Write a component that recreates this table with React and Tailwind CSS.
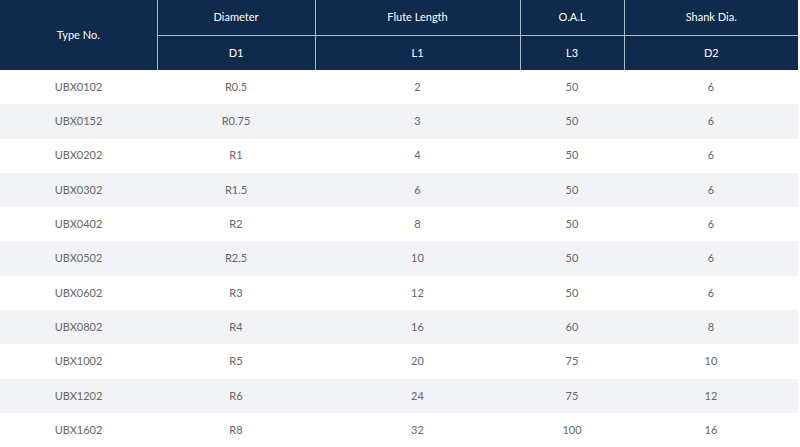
import React from "react";

const rows = [
  ["UBX0102", "R0.5", "2", "50", "6"],
  ["UBX0152", "R0.75", "3", "50", "6"],
  ["UBX0202", "R1", "4", "50", "6"],
  ["UBX0302", "R1.5", "6", "50", "6"],
  ["UBX0402", "R2", "8", "50", "6"],
  ["UBX0502", "R2.5", "10", "50", "6"],
  ["UBX0602", "R3", "12", "50", "6"],
  ["UBX0802", "R4", "16", "60", "8"],
  ["UBX1002", "R5", "20", "75", "10"],
  ["UBX1202", "R6", "24", "75", "12"],
  ["UBX1602", "R8", "32", "100", "16"],
];

export default function App() {
  return (
    <div className="w-[800px] h-[447px] bg-white overflow-hidden" style={{ fontFamily: "Lato, 'Open Sans', sans-serif" }}>
      <table className="w-[798px] table-fixed border-collapse text-[11px]">
        <colgroup>
          <col className="w-[157px]" />
          <col className="w-[158px]" />
          <col className="w-[205px]" />
          <col className="w-[104px]" />
          <col className="w-[174px]" />
        </colgroup>
        <thead className="bg-[#0f2a4b] text-white">
          <tr className="h-[35px]">
            <th rowSpan={2} className="font-normal text-center">Type No.</th>
            <th className="font-normal border-l border-b border-[#a9bccd]">Diameter</th>
            <th className="font-normal border-l border-b border-[#a9bccd]">Flute Length</th>
            <th className="font-normal border-l border-b border-[#a9bccd]">O.A.L</th>
            <th className="font-normal border-l border-b border-[#a9bccd]">Shank Dia.</th>
          </tr>
          <tr className="h-[35px]">
            <th className="font-normal border-l border-[#a9bccd]">D1</th>
            <th className="font-normal border-l border-[#a9bccd]">L1</th>
            <th className="font-normal border-l border-[#a9bccd]">L3</th>
            <th className="font-normal border-l border-[#a9bccd]">D2</th>
          </tr>
        </thead>
        <tbody className="text-[#666666]">
          {rows.map((r, i) => (
            <tr key={r[0]} className={i % 2 === 1 ? "h-[34.3px] bg-[#f2f3f7]" : "h-[34.3px] bg-white"}>
              {r.map((c, j) => (
                <td key={j} className="text-center p-0">{c}</td>
              ))}
            </tr>
          ))}
        </tbody>
      </table>
    </div>
  );
}
